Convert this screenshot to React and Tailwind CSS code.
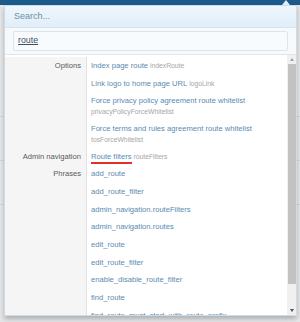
import React from "react";

const groups = [
  {
    label: "Options",
    items: [
      { title: "Index page route", hint: "indexRoute" },
      { title: "Link logo to home page URL", hint: "logoLink" },
      { title: "Force privacy policy agreement route whitelist", sub: "privacyPolicyForceWhitelist" },
      { title: "Force terms and rules agreement route whitelist", sub: "tosForceWhitelist" },
    ],
  },
  {
    label: "Admin navigation",
    items: [{ title: "Route filters", hint: "routeFilters", active: true }],
  },
  {
    label: "Phrases",
    items: [
      { title: "add_route" },
      { title: "add_route_filter" },
      { title: "admin_navigation.routeFilters" },
      { title: "admin_navigation.routes" },
      { title: "edit_route" },
      { title: "edit_route_filter" },
      { title: "enable_disable_route_filter" },
      { title: "find_route" },
      { title: "find_route_must_start_with_route_prefix" },
    ],
  },
];

function Row({ item }) {
  return (
    <div className="px-[3px] py-[2.85px]">
      <div className="h-[12px] leading-[12px] text-[7.6px] text-[#5a8ab0] whitespace-nowrap">
        <span className={item.active ? "border-b-2 border-[#e0312f] pb-[1px]" : ""}>
          {item.title}
        </span>
        {item.hint && <span className="text-[6.8px] text-[#a6a6a6]"> {item.hint}</span>}
      </div>
      {item.sub && (
        <div className="h-[10px] leading-[10px] text-[6.8px] text-[#a6a6a6] whitespace-nowrap">{item.sub}</div>
      )}
    </div>
  );
}

export default function App() {
  return (
    <div
      className="relative w-[300px] h-[322px] overflow-hidden bg-[#e6e8ea]"
      style={{ fontFamily: "'Liberation Sans', Arial, sans-serif" }}
    >
      {/* page behind */}
      <div className="h-[5px] bg-[#1a5b8b]" />
      <div className="flex flex-col">
        <div className="h-[112px] border-b border-[#d6d8da]" />
        <div className="h-[44px] border-b border-[#d6d8da]" />
        <div className="h-[44px] border-b border-[#d6d8da]" />
      </div>

      {/* popup arrow */}
      <div className="absolute left-[282px] top-0 w-0 h-0 border-l-[4px] border-r-[4px] border-b-[5px] border-l-transparent border-r-transparent border-b-[#e4f0f9]" />

      {/* popup */}
      <div className="absolute left-[4px] top-[5px] w-[293px] h-[311px] bg-white border border-[#cfdbe5] shadow-[0_3px_5px_rgba(0,0,0,0.25)] flex flex-col overflow-hidden">
        <div className="h-[22px] shrink-0 bg-gradient-to-b from-[#eef6fc] to-[#e1eef8] border-b border-[#d5e3ee] flex items-center px-[9px]">
          <span className="text-[9px] text-[#6f8ea6]">Search...</span>
        </div>
        <div className="shrink-0 bg-[#f6fafd] px-[8px] pt-[3px] pb-[3px] border-b border-[#e1e6ea]">
          <div className="h-[20px] bg-[#f8fbfd] border border-[#dde5ec] rounded-[2px] flex items-center px-[4px]">
            <span className="text-[8.8px] text-[#3d4f60] underline">route</span>
          </div>
        </div>
        <div className="flex flex-1 min-h-0">
          <div className="flex-1 min-w-0 overflow-hidden pt-[2px]">
            {groups.map((g) => (
              <div key={g.label} className="flex">
                <div className="w-[82px] shrink-0 bg-[#f5f5f5] border-r border-[#e2e2e2] text-right pr-[5px] pt-[2.85px] text-[7.6px] leading-[12px] text-[#5a5a5a] whitespace-nowrap">
                  {g.label}
                </div>
                <div className="flex-1 min-w-0 pl-[1px]">
                  {g.items.map((it) => (
                    <Row key={it.title} item={it} />
                  ))}
                </div>
              </div>
            ))}
          </div>
          <div className="w-[9px] shrink-0 bg-[#f0f0f0] flex flex-col items-center">
            <div className="h-[9px] flex items-center justify-center">
              <div className="w-0 h-0 border-l-[2.5px] border-r-[2.5px] border-b-[3px] border-l-transparent border-r-transparent border-b-[#a3a3a3]" />
            </div>
            <div className="w-[8px] h-[220px] bg-[#c2c2c2]" />
            <div className="flex-1" />
            <div className="h-[9px] flex items-center justify-center">
              <div className="w-0 h-0 border-l-[2.5px] border-r-[2.5px] border-t-[3px] border-l-transparent border-r-transparent border-t-[#505050]" />
            </div>
          </div>
        </div>
      </div>
    </div>
  );
}
